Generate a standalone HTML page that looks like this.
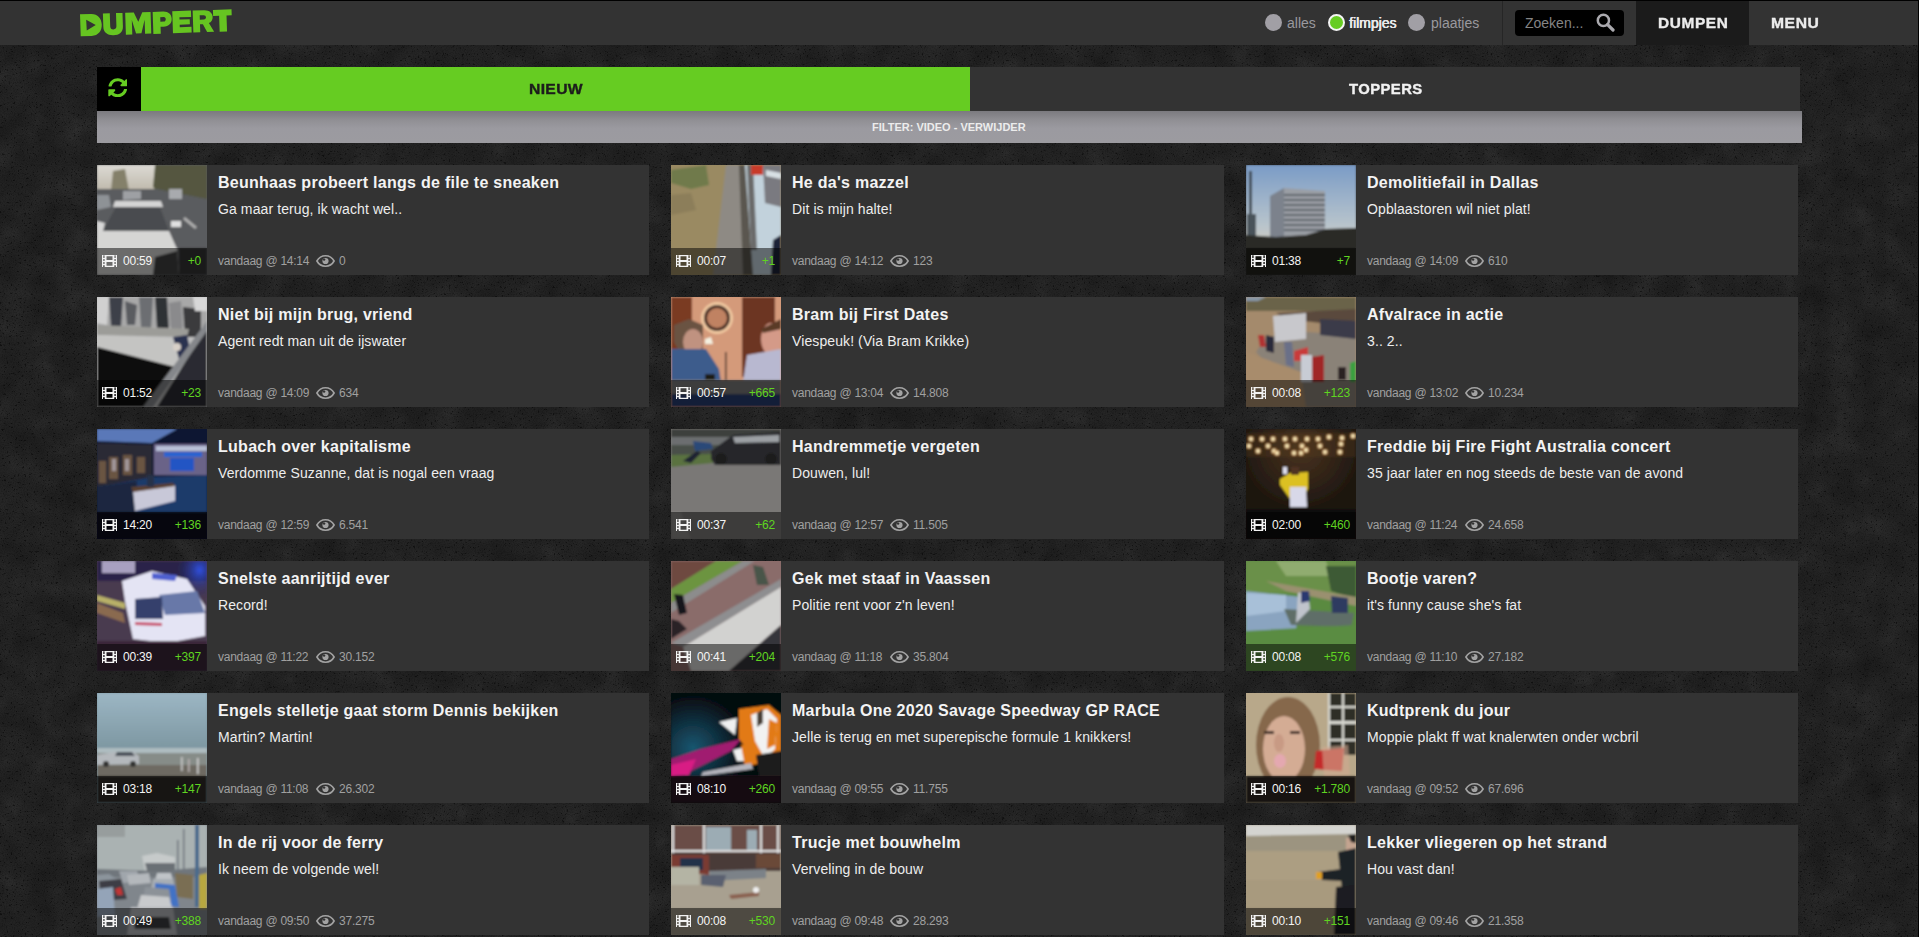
<!DOCTYPE html>
<html><head><meta charset="utf-8"><style>
*{box-sizing:border-box}
html,body{margin:0;padding:0}
body{width:1919px;height:937px;overflow:hidden;position:relative;background:#1f1f1f;font-family:"Liberation Sans",sans-serif}
.bd{position:absolute;background:#000}
#hdr{position:absolute;left:0;top:1px;width:1918px;height:44px;background:#333}
.rad{position:absolute;top:12.8px;width:17px;height:17px;border-radius:50%;background:#a19fa5}
.rad.on{background:#66cc22;border:2px solid #f4f4f4}
.rl{position:absolute;top:13px;font-size:14px;line-height:18px;color:#9a999e;white-space:nowrap}
.rl.on{color:#e6e6e6;text-shadow:0 0 0.6px #fff,0.4px 0 0 #e6e6e6}
.mont{font-weight:bold;white-space:nowrap;position:absolute}
.card{position:absolute;width:552.67px;height:110px;background:#333;overflow:hidden}
.th{position:absolute;left:0;top:0;width:110px;height:110px;overflow:hidden}
.th svg.img{position:absolute;left:0;top:0}
.ov{position:absolute;left:0;top:83px;width:110px;height:27px;background:rgba(0,0,0,0.5)}
.film{position:absolute;left:5px;top:90px}
.tm{position:absolute;left:26px;top:88px;font-size:12px;line-height:16px;color:#f4f4f4;letter-spacing:-0.2px;white-space:nowrap}
.kd{position:absolute;right:6px;top:88px;font-size:12px;line-height:16px;color:#5fd421;letter-spacing:-0.2px;white-space:nowrap}
.ti{position:absolute;left:121px;top:8px;font-size:16px;line-height:20px;font-weight:bold;color:#f3f3f3;letter-spacing:0.27px;white-space:nowrap}
.sb{position:absolute;left:121px;top:33.5px;font-size:14px;line-height:20px;color:#ededed;letter-spacing:0.1px;white-space:nowrap}
.mt{position:absolute;left:121px;top:88px;font-size:12px;line-height:16px;color:#a0a0a0;letter-spacing:-0.25px;white-space:nowrap}
.eye{position:absolute;top:90px}
.vw{position:absolute;top:88px;font-size:12px;line-height:16px;color:#a0a0a0;letter-spacing:-0.2px;white-space:nowrap}
</style></head><body>

<svg width="0" height="0" style="position:absolute"><defs><filter id="tb" x="-5%" y="-5%" width="110%" height="110%"><feGaussianBlur stdDeviation="0.9"/></filter></defs></svg>
<svg style="position:absolute;left:0;top:0" width="1919" height="937"><defs><filter id="nzA" x="0" y="0" width="100%" height="100%"><feTurbulence type="fractalNoise" baseFrequency="0.035" numOctaves="4" seed="11"/><feColorMatrix type="matrix" values="0 0 0 0 0  0 0 0 0 0  0 0 0 0 0  2.2 0 0 0 -1.05"/></filter><filter id="nzB" x="0" y="0" width="100%" height="100%"><feTurbulence type="fractalNoise" baseFrequency="0.035" numOctaves="4" seed="11"/><feColorMatrix type="matrix" values="0 0 0 0 1  0 0 0 0 1  0 0 0 0 1  -2.2 0 0 0 1.0"/></filter><filter id="nzC" x="0" y="0" width="100%" height="100%"><feTurbulence type="fractalNoise" baseFrequency="0.45" numOctaves="2" seed="5"/><feColorMatrix type="matrix" values="0 0 0 0 0  0 0 0 0 0  0 0 0 0 0  10 0 0 0 -6.6"/></filter><filter id="nzD" x="0" y="0" width="100%" height="100%"><feTurbulence type="fractalNoise" baseFrequency="0.9" numOctaves="1" seed="3"/><feColorMatrix type="matrix" values="0 0 0 0 0  0 0 0 0 0  0 0 0 0 0  0 0 0 -2.2 1.25"/></filter></defs><rect width="1919" height="937" fill="#242424"/><rect width="1919" height="937" filter="url(#nzA)" opacity="0.22"/><rect width="1919" height="937" filter="url(#nzB)" opacity="0.05"/><rect width="1919" height="937" filter="url(#nzC)" opacity="0.45"/><rect width="1919" height="937" filter="url(#nzD)" opacity="0.25"/></svg>
<div class="bd" style="left:0;top:0;width:1919px;height:1px"></div>
<div class="bd" style="left:1918px;top:0;width:1px;height:937px"></div>
<div id="hdr">
<svg style="position:absolute;left:0;top:-1px" width="260" height="45" viewBox="0 0 260 45"><g transform="translate(80,14.3) rotate(-1.9)" fill="#66c421" fill-rule="evenodd">
<path d="M0 0H11C17.5 0 21.4 4.5 21.4 11S17.5 22 11 22H0Z M6 5.6L15.4 11.2L6.2 16.5Z"/>
<path d="M22.9 0H29.8V13C29.8 15.5 31 16.2 32.9 16.2S36 15.5 36 13V0H42.5V13.5C42.5 19 38.5 22 32.7 22S22.9 19 22.9 13.5Z"/>
<path d="M45.2 0H53.8L58 9.5L62.3 0H70.6V21.6H64.4V7.5L60.8 21H55.4L51.6 7.5V22H45.2Z"/>
<path d="M72.7 0H83C88.5 0 91.5 3 91.5 7.6S88.5 15.2 83 15.2H80.1V22H72.7Z M80.1 5.5H83.5C85 5.5 85.5 6.5 85.5 7.7S85 10 83.5 10H80.1Z"/>
<path d="M92.3 0H111V6.3H99.3V8.5H109.5V13.7H99.3V16.2H111V22H92.3Z"/>
<path d="M112.7 0H124C129.5 0 132.5 3 132.5 7C132.5 10 131 12 128.5 13L133.5 22H126.5L122.5 14H119.6V22H112.7Z M119.6 5H123.5C125 5 125.8 6 125.8 7.2S125 9.3 123.5 9.3H119.6Z"/>
<path d="M133 0H151.6V6H146.4V22H139V6H133Z"/>
</g></svg>
<div class="rad" style="left:1264.5px"></div><div class="rl" style="left:1287px">alles</div>
<div class="rad on" style="left:1327.5px"></div><div class="rl on" style="left:1349px">filmpjes</div>
<div class="rad" style="left:1408px"></div><div class="rl" style="left:1431px">plaatjes</div>
<div style="position:absolute;left:1502px;top:0;width:1px;height:44px;background:#262626"></div>
<div style="position:absolute;left:1515px;top:9px;width:109px;height:26px;border-radius:4px;background:#000"></div>
<div style="position:absolute;left:1525px;top:13px;font-size:14px;line-height:18px;color:#858585;white-space:nowrap">Zoeken...</div>
<svg style="position:absolute;left:1595.5px;top:11.5px" width="19" height="19" viewBox="0 0 19 19"><circle cx="7.4" cy="7.4" r="5.6" fill="none" stroke="#aaa9ae" stroke-width="2.5"/><path d="M11.6 11.6L17 17" stroke="#aaa9ae" stroke-width="3.2" stroke-linecap="round"/></svg>
<div style="position:absolute;left:1635.5px;top:0;width:113.5px;height:44px;background:#1b1b1b"></div>
<div class="mont" style="left:1658px;top:13px;font-size:14px;line-height:18px;color:#ececec;letter-spacing:0.55px;transform:scaleX(1.1);transform-origin:0 0;-webkit-text-stroke:0.35px #ececec">DUMPEN</div>
<div class="mont" style="left:1771px;top:13px;font-size:14px;line-height:18px;color:#ececec;letter-spacing:0.5px;transform:scaleX(1.12);transform-origin:0 0;-webkit-text-stroke:0.35px #ececec">MENU</div>
</div>
<div style="position:absolute;left:97px;top:67px;width:44px;height:44px;background:#000"></div>
<svg style="position:absolute;left:107.7px;top:77.7px" width="19.6" height="19.6" viewBox="0 0 512 512"><path fill="#66cc22" d="M370.72 133.28C339.458 104.008 298.888 87.962 255.848 88c-77.458.068-144.328 53.178-162.791 126.85-1.344 5.363-6.122 9.15-11.651 9.15H24.103c-7.498 0-13.194-6.807-11.807-14.176C33.933 94.924 134.813 8 256 8c66.448 0 126.791 26.136 171.315 68.685L463.03 40.97C478.149 25.851 504 36.559 504 57.941V192c0 13.255-10.745 24-24 24H345.941c-21.382 0-32.09-25.851-16.971-40.971l41.75-41.749zM32 296h134.059c21.382 0 32.09 25.851 16.971 40.971l-41.75 41.75c31.262 29.273 71.835 45.319 114.876 45.28 77.418-.07 144.315-53.144 162.787-126.849 1.344-5.363 6.122-9.15 11.651-9.15h57.304c7.498 0 13.194 6.807 11.807 14.176C478.067 417.076 377.187 504 256 504c-66.448 0-126.791-26.136-171.315-68.685L48.97 471.03C33.851 486.149 8 475.441 8 454.059V320c0-13.255 10.745-24 24-24z"/></svg>
<div style="position:absolute;left:141px;top:67px;width:829px;height:44px;background:#66cc22"></div>
<div class="mont" style="left:529px;top:80px;font-size:14px;line-height:18px;color:#1c1c1c;letter-spacing:0.3px;transform:scaleX(1.12);transform-origin:0 0;-webkit-text-stroke:0.35px #1c1c1c">NIEUW</div>
<div style="position:absolute;left:970px;top:67px;width:830px;height:44px;background:#333"></div>
<div class="mont" style="left:1349px;top:80px;font-size:14px;line-height:18px;color:#f2f2f2;letter-spacing:0.4px;transform:scaleX(1.06);transform-origin:0 0;-webkit-text-stroke:0.35px #f2f2f2">TOPPERS</div>
<div style="position:absolute;left:97px;top:111px;width:1705px;height:32px;background:linear-gradient(#7b7a7f,#919095 30%,#9b9aa0 55%,#9c9ba0)"></div>
<div class="mont" style="left:872px;top:120px;font-size:11px;line-height:14px;color:#ececec">FILTER: VIDEO - VERWIJDER</div>
<div class="card" style="left:97px;top:165px;width:552px">
<div class="th"><svg class="img" width="110" height="110" viewBox="0 0 110 110"><g filter="url(#tb)"><rect x="-10" y="-10" width="130" height="130" fill="#5a5c5e"/>
<defs><linearGradient id="g1s" x1="0" y1="0" x2="0" y2="1"><stop offset="0" stop-color="#dcdad4"/><stop offset="1" stop-color="#bcb6a8"/></linearGradient></defs>
<rect width="70" height="28" fill="url(#g1s)"/>
<polygon points="58,0 110,0 110,36 62,28 56,22" fill="#55573f"/>
<polygon points="16,6 28,4 32,26 14,26" fill="#84806a"/>
<polygon points="0,24 60,24 110,34 110,83 0,83" fill="#5a5c5e"/>
<polygon points="0,30 12,30 14,42 0,45" fill="#8e9296"/>
<polygon points="26,26 44,26 44,34 26,35" fill="#9ea0a4"/>
<polygon points="72,24 85,24 85,34 72,34" fill="#a8aaae"/>
<polygon points="88,52 100,62 98,64 86,54" fill="#b0b0b0"/>
<polygon points="20,40 62,40 72,66 6,66" fill="#4a4c50"/>
<polygon points="18,36 64,36 66,42 16,42" fill="#d4d4d4"/>
<polygon points="0,56 8,58 6,66 0,66" fill="#d8d8d8"/>
<polygon points="74,56 84,56 84,62 74,62" fill="#e0e0e0"/>
<polygon points="0,64 6,66 72,66 80,84 82,110 0,110" fill="#d6d6d4"/>
<polygon points="58,92 80,86 82,110 56,110" fill="#404040"/>
<polygon points="82,83 110,83 110,110 82,110" fill="#343434"/>
</g></svg></div>
<div class="ov"></div><svg class="film" width="15" height="12" viewBox="0 0 15 12"><path fill="#f2f2f2" fill-rule="evenodd" d="M0 0H15V12H0Z M1 1.2H2.8V2.8H1Z M1 4.2H2.8V5.8H1Z M1 7.2H2.8V8.8H1Z M1 10.2H2.8V12H1Z M1 0H2.8V0.6H1Z M12.2 0H14V0.6H12.2Z M12.2 1.2H14V2.8H12.2Z M12.2 4.2H14V5.8H12.2Z M12.2 7.2H14V8.8H12.2Z M12.2 10.2H14V12H12.2Z M4.3 1.3H10.7V5H4.3Z M4.3 7H10.7V10.7H4.3Z"/><path fill="#f2f2f2" d="M3.6 0H4.3V12H3.6Z M10.7 0H11.4V12H10.7Z"/></svg>
<div class="tm">00:59</div><div class="kd" style="left:0;width:104px;text-align:right">+0</div>
<div class="ti">Beunhaas probeert langs de file te sneaken</div><div class="sb">Ga maar terug, ik wacht wel..</div>
<div class="mt">vandaag @ 14:14</div>
<svg class="eye" style="left:219px" width="19" height="12" viewBox="0 0 19 12"><path fill="none" stroke="#a3a3a3" stroke-width="1.6" d="M0.9 6C3 2.2 6.2 0.8 9.5 0.8S16 2.2 18.1 6C16 9.8 12.8 11.2 9.5 11.2S3 9.8 0.9 6Z"/><circle cx="9.5" cy="6" r="3.1" fill="#a3a3a3"/><circle cx="8.1" cy="4.6" r="1.2" fill="#333"/></svg><div class="vw" style="left:242px">0</div>
</div>
<div class="card" style="left:671px;top:165px;width:553px">
<div class="th"><svg class="img" width="110" height="110" viewBox="0 0 110 110"><g filter="url(#tb)"><rect x="-10" y="-10" width="130" height="130" fill="#9a8a62"/>
<polygon points="0,0 62,0 48,83 40,110 0,110" fill="#9a8a62"/>
<polygon points="0,5 35,0 38,20 20,24 0,18" fill="#6f7a4c"/>
<polygon points="0,30 20,28 25,45 0,50" fill="#8c7e5a"/>
<polygon points="55,0 75,0 80,110 42,110" fill="#8e8a84"/>
<polygon points="68,0 76,0 82,110 72,110" fill="#5a5650"/>
<polygon points="74,0 110,0 110,110 82,110" fill="#c2d2dc"/>
<polygon points="76,0 82,0 86,85 80,85" fill="#6a6a6a"/>
<polygon points="80,0 92,0 92,10 80,10" fill="#c83a2c"/>
<polygon points="92,0 110,0 110,42 94,38" fill="#7a7a80"/>
<polygon points="95,5 110,8 110,14 95,11" fill="#d8e0e4"/>
<polygon points="102,75 110,70 110,110 100,110" fill="#1c2238"/>
</g></svg></div>
<div class="ov"></div><svg class="film" width="15" height="12" viewBox="0 0 15 12"><path fill="#f2f2f2" fill-rule="evenodd" d="M0 0H15V12H0Z M1 1.2H2.8V2.8H1Z M1 4.2H2.8V5.8H1Z M1 7.2H2.8V8.8H1Z M1 10.2H2.8V12H1Z M1 0H2.8V0.6H1Z M12.2 0H14V0.6H12.2Z M12.2 1.2H14V2.8H12.2Z M12.2 4.2H14V5.8H12.2Z M12.2 7.2H14V8.8H12.2Z M12.2 10.2H14V12H12.2Z M4.3 1.3H10.7V5H4.3Z M4.3 7H10.7V10.7H4.3Z"/><path fill="#f2f2f2" d="M3.6 0H4.3V12H3.6Z M10.7 0H11.4V12H10.7Z"/></svg>
<div class="tm">00:07</div><div class="kd" style="left:0;width:104px;text-align:right">+1</div>
<div class="ti">He da's mazzel</div><div class="sb">Dit is mijn halte!</div>
<div class="mt">vandaag @ 14:12</div>
<svg class="eye" style="left:219px" width="19" height="12" viewBox="0 0 19 12"><path fill="none" stroke="#a3a3a3" stroke-width="1.6" d="M0.9 6C3 2.2 6.2 0.8 9.5 0.8S16 2.2 18.1 6C16 9.8 12.8 11.2 9.5 11.2S3 9.8 0.9 6Z"/><circle cx="9.5" cy="6" r="3.1" fill="#a3a3a3"/><circle cx="8.1" cy="4.6" r="1.2" fill="#333"/></svg><div class="vw" style="left:242px">123</div>
</div>
<div class="card" style="left:1246px;top:165px;width:552px">
<div class="th"><svg class="img" width="110" height="110" viewBox="0 0 110 110"><g filter="url(#tb)"><rect x="-10" y="-10" width="130" height="130" fill="#2c2c26"/>
<defs><linearGradient id="g3s" x1="0" y1="0" x2="0" y2="1"><stop offset="0" stop-color="#7b9cc6"/><stop offset="0.75" stop-color="#b8c4cc"/><stop offset="1" stop-color="#d0ccc0"/></linearGradient></defs>
<rect width="110" height="80" fill="url(#g3s)"/>
<polygon points="24,31 38,23 38,75 24,77" fill="#7c828c"/>
<polygon points="38,23 79,26 79,72 38,75" fill="#9a9ea4"/>
<g fill="#5c6068"><rect x="38" y="29" width="41" height="2"/><rect x="38" y="34" width="41" height="2"/><rect x="38" y="39" width="41" height="2"/><rect x="38" y="44" width="41" height="2"/><rect x="38" y="49" width="41" height="2"/><rect x="38" y="54" width="41" height="2"/><rect x="38" y="59" width="41" height="2"/><rect x="38" y="64" width="41" height="2"/></g>
<rect x="3" y="6" width="3" height="80" fill="#3e4650"/>
<rect x="1" y="49" width="9" height="25" fill="#4a525a"/>
<polygon points="0,70 30,72 60,70 80,64 110,63 110,86 0,86" fill="#2c2c26"/>
<rect x="0" y="83" width="110" height="27" fill="#24221e"/>
</g></svg></div>
<div class="ov"></div><svg class="film" width="15" height="12" viewBox="0 0 15 12"><path fill="#f2f2f2" fill-rule="evenodd" d="M0 0H15V12H0Z M1 1.2H2.8V2.8H1Z M1 4.2H2.8V5.8H1Z M1 7.2H2.8V8.8H1Z M1 10.2H2.8V12H1Z M1 0H2.8V0.6H1Z M12.2 0H14V0.6H12.2Z M12.2 1.2H14V2.8H12.2Z M12.2 4.2H14V5.8H12.2Z M12.2 7.2H14V8.8H12.2Z M12.2 10.2H14V12H12.2Z M4.3 1.3H10.7V5H4.3Z M4.3 7H10.7V10.7H4.3Z"/><path fill="#f2f2f2" d="M3.6 0H4.3V12H3.6Z M10.7 0H11.4V12H10.7Z"/></svg>
<div class="tm">01:38</div><div class="kd" style="left:0;width:104px;text-align:right">+7</div>
<div class="ti">Demolitiefail in Dallas</div><div class="sb">Opblaastoren wil niet plat!</div>
<div class="mt">vandaag @ 14:09</div>
<svg class="eye" style="left:219px" width="19" height="12" viewBox="0 0 19 12"><path fill="none" stroke="#a3a3a3" stroke-width="1.6" d="M0.9 6C3 2.2 6.2 0.8 9.5 0.8S16 2.2 18.1 6C16 9.8 12.8 11.2 9.5 11.2S3 9.8 0.9 6Z"/><circle cx="9.5" cy="6" r="3.1" fill="#a3a3a3"/><circle cx="8.1" cy="4.6" r="1.2" fill="#333"/></svg><div class="vw" style="left:242px">610</div>
</div>
<div class="card" style="left:97px;top:297px;width:552px">
<div class="th"><svg class="img" width="110" height="110" viewBox="0 0 110 110"><g filter="url(#tb)"><rect x="-10" y="-10" width="130" height="130" fill="#c0c0c0"/>
<rect width="110" height="30" fill="#a8a8a8"/>
<polygon points="0,0 12,0 10,28 0,26" fill="#d0d0d0"/>
<polygon points="12,0 26,0 24,30 14,30" fill="#3e4048"/>
<polygon points="28,4 40,8 38,28 30,28" fill="#5a5c60"/>
<polygon points="42,0 56,0 54,32 44,30" fill="#6c6e72"/>
<polygon points="58,0 70,0 72,34 60,32" fill="#2e3036"/>
<polygon points="72,6 84,4 86,36 74,34" fill="#8a8a8c"/>
<polygon points="86,10 104,12 104,40 88,40" fill="#3a3a3c"/>
<polygon points="96,0 110,0 110,14 98,14" fill="#d8d8d8"/>
<polygon points="0,28 92,32 90,40 0,38" fill="#9c9c98"/>
<polygon points="0,38 90,42 78,70 0,50" fill="#c4c4c2"/>
<polygon points="0,50 78,70 54,110 0,110" fill="#0c0c0c"/>
<polygon points="76,40 90,38 94,56 82,62" fill="#2a3050"/>
<circle cx="80" cy="50" r="4" fill="#d8d0c8"/>
<polygon points="60,110 110,30 110,110" fill="#2a2c30"/>
<polygon points="46,110 110,24 110,34 56,110" fill="#85878b"/>
</g></svg></div>
<div class="ov"></div><svg class="film" width="15" height="12" viewBox="0 0 15 12"><path fill="#f2f2f2" fill-rule="evenodd" d="M0 0H15V12H0Z M1 1.2H2.8V2.8H1Z M1 4.2H2.8V5.8H1Z M1 7.2H2.8V8.8H1Z M1 10.2H2.8V12H1Z M1 0H2.8V0.6H1Z M12.2 0H14V0.6H12.2Z M12.2 1.2H14V2.8H12.2Z M12.2 4.2H14V5.8H12.2Z M12.2 7.2H14V8.8H12.2Z M12.2 10.2H14V12H12.2Z M4.3 1.3H10.7V5H4.3Z M4.3 7H10.7V10.7H4.3Z"/><path fill="#f2f2f2" d="M3.6 0H4.3V12H3.6Z M10.7 0H11.4V12H10.7Z"/></svg>
<div class="tm">01:52</div><div class="kd" style="left:0;width:104px;text-align:right">+23</div>
<div class="ti">Niet bij mijn brug, vriend</div><div class="sb">Agent redt man uit de ijswater</div>
<div class="mt">vandaag @ 14:09</div>
<svg class="eye" style="left:219px" width="19" height="12" viewBox="0 0 19 12"><path fill="none" stroke="#a3a3a3" stroke-width="1.6" d="M0.9 6C3 2.2 6.2 0.8 9.5 0.8S16 2.2 18.1 6C16 9.8 12.8 11.2 9.5 11.2S3 9.8 0.9 6Z"/><circle cx="9.5" cy="6" r="3.1" fill="#a3a3a3"/><circle cx="8.1" cy="4.6" r="1.2" fill="#333"/></svg><div class="vw" style="left:242px">634</div>
</div>
<div class="card" style="left:671px;top:297px;width:553px">
<div class="th"><svg class="img" width="110" height="110" viewBox="0 0 110 110"><g filter="url(#tb)"><rect x="-10" y="-10" width="130" height="130" fill="#d49a7a"/>
<rect width="110" height="110" fill="#d49a7a"/>
<rect x="0" y="0" width="21" height="52" fill="#7a3a22"/>
<rect x="71" y="0" width="33" height="80" fill="#6c3420"/>
<circle cx="46" cy="21" r="16" fill="#f0c8a0"/>
<circle cx="46" cy="21" r="13" fill="#4a3028"/>
<circle cx="46" cy="21" r="10" fill="#c08262"/>
<polygon points="3,28 18,22 32,28 32,55 10,58 3,45" fill="#6a5242"/>
<ellipse cx="22" cy="45" rx="10" ry="13" fill="#c09280"/>
<polygon points="0,52 35,52 48,72 50,85 0,85" fill="#3c5c8c"/>
<rect x="54" y="55" width="1.5" height="28" fill="#3a2a20"/>
<polygon points="34,42 40,40 42,47 34,47" fill="#f4f0e0"/>
<ellipse cx="100" cy="42" rx="10" ry="16" fill="#d49a88"/>
<polygon points="90,32 110,22 110,32 92,36" fill="#5a3a28"/>
<polygon points="76,58 110,52 110,85 72,85" fill="#b8b8d0"/>
<rect x="34" y="77" width="10" height="12" fill="#1e1a18"/>
<rect x="0" y="83" width="110" height="15" fill="#7a7a7a"/>
<rect x="0" y="97" width="110" height="13" fill="#283c70"/>
</g></svg></div>
<div class="ov"></div><svg class="film" width="15" height="12" viewBox="0 0 15 12"><path fill="#f2f2f2" fill-rule="evenodd" d="M0 0H15V12H0Z M1 1.2H2.8V2.8H1Z M1 4.2H2.8V5.8H1Z M1 7.2H2.8V8.8H1Z M1 10.2H2.8V12H1Z M1 0H2.8V0.6H1Z M12.2 0H14V0.6H12.2Z M12.2 1.2H14V2.8H12.2Z M12.2 4.2H14V5.8H12.2Z M12.2 7.2H14V8.8H12.2Z M12.2 10.2H14V12H12.2Z M4.3 1.3H10.7V5H4.3Z M4.3 7H10.7V10.7H4.3Z"/><path fill="#f2f2f2" d="M3.6 0H4.3V12H3.6Z M10.7 0H11.4V12H10.7Z"/></svg>
<div class="tm">00:57</div><div class="kd" style="left:0;width:104px;text-align:right">+665</div>
<div class="ti">Bram bij First Dates</div><div class="sb">Viespeuk! (Via Bram Krikke)</div>
<div class="mt">vandaag @ 13:04</div>
<svg class="eye" style="left:219px" width="19" height="12" viewBox="0 0 19 12"><path fill="none" stroke="#a3a3a3" stroke-width="1.6" d="M0.9 6C3 2.2 6.2 0.8 9.5 0.8S16 2.2 18.1 6C16 9.8 12.8 11.2 9.5 11.2S3 9.8 0.9 6Z"/><circle cx="9.5" cy="6" r="3.1" fill="#a3a3a3"/><circle cx="8.1" cy="4.6" r="1.2" fill="#333"/></svg><div class="vw" style="left:242px">14.808</div>
</div>
<div class="card" style="left:1246px;top:297px;width:552px">
<div class="th"><svg class="img" width="110" height="110" viewBox="0 0 110 110"><g filter="url(#tb)"><rect x="-10" y="-10" width="130" height="130" fill="#a48a6c"/>
<rect width="110" height="110" fill="#a48a6c"/>
<polygon points="0,0 110,0 110,14 0,14" fill="#6a6448"/>
<polygon points="0,0 20,0 12,4 0,4" fill="#8898a8"/>
<polygon points="30,16 110,12 110,30 40,22" fill="#5a4a3c"/>
<polygon points="20,40 60,35 110,38 110,110 60,110 10,55" fill="#8a8278"/>
<polygon points="0,55 55,75 60,110 0,110" fill="#a88c6c"/>
<polygon points="27,19 60,16 60,42 29,45" fill="#c8c8cc"/>
<polygon points="74,22 110,24 110,42 74,38" fill="#3a3a48"/>
<polygon points="12,38 18,38 20,50 14,50" fill="#b03030"/>
<polygon points="20,38 28,40 28,56 20,54" fill="#2a2a3a"/>
<polygon points="38,45 46,45 48,70 40,68" fill="#6a7088"/>
<polygon points="48,54 62,50 62,64 48,64" fill="#c83a3a"/>
<polygon points="55,58 66,58 66,85 55,85" fill="#c8ccd4"/>
<polygon points="66,60 78,58 78,85 66,85" fill="#a02828"/>
<polygon points="92,70 100,70 100,83 92,83" fill="#2a2020"/>
<polygon points="104,66 110,64 110,85 104,85" fill="#3aa040"/>
</g></svg></div>
<div class="ov"></div><svg class="film" width="15" height="12" viewBox="0 0 15 12"><path fill="#f2f2f2" fill-rule="evenodd" d="M0 0H15V12H0Z M1 1.2H2.8V2.8H1Z M1 4.2H2.8V5.8H1Z M1 7.2H2.8V8.8H1Z M1 10.2H2.8V12H1Z M1 0H2.8V0.6H1Z M12.2 0H14V0.6H12.2Z M12.2 1.2H14V2.8H12.2Z M12.2 4.2H14V5.8H12.2Z M12.2 7.2H14V8.8H12.2Z M12.2 10.2H14V12H12.2Z M4.3 1.3H10.7V5H4.3Z M4.3 7H10.7V10.7H4.3Z"/><path fill="#f2f2f2" d="M3.6 0H4.3V12H3.6Z M10.7 0H11.4V12H10.7Z"/></svg>
<div class="tm">00:08</div><div class="kd" style="left:0;width:104px;text-align:right">+123</div>
<div class="ti">Afvalrace in actie</div><div class="sb">3.. 2..</div>
<div class="mt">vandaag @ 13:02</div>
<svg class="eye" style="left:219px" width="19" height="12" viewBox="0 0 19 12"><path fill="none" stroke="#a3a3a3" stroke-width="1.6" d="M0.9 6C3 2.2 6.2 0.8 9.5 0.8S16 2.2 18.1 6C16 9.8 12.8 11.2 9.5 11.2S3 9.8 0.9 6Z"/><circle cx="9.5" cy="6" r="3.1" fill="#a3a3a3"/><circle cx="8.1" cy="4.6" r="1.2" fill="#333"/></svg><div class="vw" style="left:242px">10.234</div>
</div>
<div class="card" style="left:97px;top:429px;width:552px">
<div class="th"><svg class="img" width="110" height="110" viewBox="0 0 110 110"><g filter="url(#tb)"><rect x="-10" y="-10" width="130" height="130" fill="#101830"/>
<rect width="110" height="110" fill="#101830"/>
<polygon points="0,0 80,0 55,14 0,12" fill="#5a78b8"/>
<polygon points="0,14 55,16 55,48 0,58" fill="#2c2a34"/>
<g fill="#a07850" opacity="0.55"><rect x="2" y="32" width="7" height="22"/><rect x="12" y="28" width="9" height="22"/><rect x="26" y="26" width="9" height="20"/><rect x="40" y="28" width="8" height="16"/></g><g fill="#d8d8f0" opacity="0.5"><rect x="15" y="30" width="4" height="12"/><rect x="28" y="30" width="4" height="12"/></g>
<polygon points="57,15 110,15 110,46 57,46" fill="#6a6488"/>
<rect x="59" y="17" width="51" height="5" fill="#b8c0d8"/>
<rect x="67" y="23" width="38" height="5" fill="#2a64d0"/>
<rect x="73" y="29" width="24" height="13" fill="#2454c4"/>
<polygon points="0,58 55,48 110,46 110,83 0,83" fill="#1e3a6a"/>
<polygon points="0,58 40,52 38,83 0,83" fill="#1a2840"/>
<polygon points="36,62 78,56 78,72 38,82" fill="#c8c8d8"/>
<polygon points="34,58 76,54 78,57 36,63" fill="#5a4030"/>
<rect x="50" y="46" width="7" height="12" fill="#283048"/>
<rect x="0" y="83" width="110" height="27" fill="#0a0e1a"/>
</g></svg></div>
<div class="ov"></div><svg class="film" width="15" height="12" viewBox="0 0 15 12"><path fill="#f2f2f2" fill-rule="evenodd" d="M0 0H15V12H0Z M1 1.2H2.8V2.8H1Z M1 4.2H2.8V5.8H1Z M1 7.2H2.8V8.8H1Z M1 10.2H2.8V12H1Z M1 0H2.8V0.6H1Z M12.2 0H14V0.6H12.2Z M12.2 1.2H14V2.8H12.2Z M12.2 4.2H14V5.8H12.2Z M12.2 7.2H14V8.8H12.2Z M12.2 10.2H14V12H12.2Z M4.3 1.3H10.7V5H4.3Z M4.3 7H10.7V10.7H4.3Z"/><path fill="#f2f2f2" d="M3.6 0H4.3V12H3.6Z M10.7 0H11.4V12H10.7Z"/></svg>
<div class="tm">14:20</div><div class="kd" style="left:0;width:104px;text-align:right">+136</div>
<div class="ti">Lubach over kapitalisme</div><div class="sb">Verdomme Suzanne, dat is nogal een vraag</div>
<div class="mt">vandaag @ 12:59</div>
<svg class="eye" style="left:219px" width="19" height="12" viewBox="0 0 19 12"><path fill="none" stroke="#a3a3a3" stroke-width="1.6" d="M0.9 6C3 2.2 6.2 0.8 9.5 0.8S16 2.2 18.1 6C16 9.8 12.8 11.2 9.5 11.2S3 9.8 0.9 6Z"/><circle cx="9.5" cy="6" r="3.1" fill="#a3a3a3"/><circle cx="8.1" cy="4.6" r="1.2" fill="#333"/></svg><div class="vw" style="left:242px">6.541</div>
</div>
<div class="card" style="left:671px;top:429px;width:553px">
<div class="th"><svg class="img" width="110" height="110" viewBox="0 0 110 110"><g filter="url(#tb)"><rect x="-10" y="-10" width="130" height="130" fill="#7a7876"/>
<rect width="110" height="110" fill="#7a7876"/>
<rect width="110" height="12" fill="#3c403c"/>
<rect y="8" width="110" height="8" fill="#6c6e70"/>
<rect y="16" width="110" height="12" fill="#4a5048"/>
<polygon points="0,26 42,25 42,34 0,38" fill="#5a7240"/>
<polygon points="40,22 62,6 110,3 110,36 44,36 40,30" fill="#26282c"/>
<polygon points="62,8 108,6 108,13 64,14" fill="#9ca0a4"/>
<circle cx="50" cy="30" r="6" fill="#1a1a1c"/><circle cx="100" cy="30" r="6" fill="#1a1a1c"/>
<polygon points="22,12 40,14 42,20 24,22" fill="#2c4878"/>
<polygon points="12,32 26,22 30,24 20,34" fill="#1e2230"/>
<polygon points="0,83 10,83 20,110 0,110" fill="#8a8886"/>
</g></svg></div>
<div class="ov"></div><svg class="film" width="15" height="12" viewBox="0 0 15 12"><path fill="#f2f2f2" fill-rule="evenodd" d="M0 0H15V12H0Z M1 1.2H2.8V2.8H1Z M1 4.2H2.8V5.8H1Z M1 7.2H2.8V8.8H1Z M1 10.2H2.8V12H1Z M1 0H2.8V0.6H1Z M12.2 0H14V0.6H12.2Z M12.2 1.2H14V2.8H12.2Z M12.2 4.2H14V5.8H12.2Z M12.2 7.2H14V8.8H12.2Z M12.2 10.2H14V12H12.2Z M4.3 1.3H10.7V5H4.3Z M4.3 7H10.7V10.7H4.3Z"/><path fill="#f2f2f2" d="M3.6 0H4.3V12H3.6Z M10.7 0H11.4V12H10.7Z"/></svg>
<div class="tm">00:37</div><div class="kd" style="left:0;width:104px;text-align:right">+62</div>
<div class="ti">Handremmetje vergeten</div><div class="sb">Douwen, lul!</div>
<div class="mt">vandaag @ 12:57</div>
<svg class="eye" style="left:219px" width="19" height="12" viewBox="0 0 19 12"><path fill="none" stroke="#a3a3a3" stroke-width="1.6" d="M0.9 6C3 2.2 6.2 0.8 9.5 0.8S16 2.2 18.1 6C16 9.8 12.8 11.2 9.5 11.2S3 9.8 0.9 6Z"/><circle cx="9.5" cy="6" r="3.1" fill="#a3a3a3"/><circle cx="8.1" cy="4.6" r="1.2" fill="#333"/></svg><div class="vw" style="left:242px">11.505</div>
</div>
<div class="card" style="left:1246px;top:429px;width:552px">
<div class="th"><svg class="img" width="110" height="110" viewBox="0 0 110 110"><g filter="url(#tb)"><rect x="-10" y="-10" width="130" height="130" fill="#1a140e"/>
<defs><radialGradient id="g9" cx="0.5" cy="0.18" r="0.6"><stop offset="0" stop-color="#4a3420"/><stop offset="1" stop-color="#1a140e"/></radialGradient></defs>
<rect width="110" height="110" fill="url(#g9)"/>
<rect y="4" width="110" height="24" fill="#5a3e22" opacity="0.3"/>
<circle cx="5" cy="10" r="3.2" fill="#c08040" opacity="0.6"/><circle cx="5" cy="10" r="1.9" fill="#fff0c0"/><circle cx="16" cy="10" r="3.2" fill="#c08040" opacity="0.6"/><circle cx="16" cy="10" r="1.9" fill="#fff0c0"/><circle cx="27" cy="10" r="3.2" fill="#c08040" opacity="0.6"/><circle cx="27" cy="10" r="1.9" fill="#fff0c0"/><circle cx="39" cy="10" r="3.2" fill="#c08040" opacity="0.6"/><circle cx="39" cy="10" r="1.9" fill="#fff0c0"/><circle cx="49" cy="10" r="3.2" fill="#c08040" opacity="0.6"/><circle cx="49" cy="10" r="1.9" fill="#fff0c0"/><circle cx="61" cy="10" r="3.2" fill="#c08040" opacity="0.6"/><circle cx="61" cy="10" r="1.9" fill="#fff0c0"/><circle cx="72" cy="10" r="3.2" fill="#c08040" opacity="0.6"/><circle cx="72" cy="10" r="1.9" fill="#fff0c0"/><circle cx="83" cy="8" r="3.2" fill="#c08040" opacity="0.6"/><circle cx="83" cy="8" r="1.9" fill="#fff0c0"/><circle cx="96" cy="9" r="3.2" fill="#c08040" opacity="0.6"/><circle cx="96" cy="9" r="1.9" fill="#fff0c0"/><circle cx="107" cy="7" r="3.2" fill="#c08040" opacity="0.6"/><circle cx="107" cy="7" r="1.9" fill="#fff0c0"/><circle cx="3" cy="17" r="3.2" fill="#c08040" opacity="0.6"/><circle cx="3" cy="17" r="1.9" fill="#fff0c0"/><circle cx="22" cy="17" r="3.2" fill="#c08040" opacity="0.6"/><circle cx="22" cy="17" r="1.9" fill="#fff0c0"/><circle cx="41" cy="17" r="3.2" fill="#c08040" opacity="0.6"/><circle cx="41" cy="17" r="1.9" fill="#fff0c0"/><circle cx="56" cy="17" r="3.2" fill="#c08040" opacity="0.6"/><circle cx="56" cy="17" r="1.9" fill="#fff0c0"/><circle cx="74" cy="17" r="3.2" fill="#c08040" opacity="0.6"/><circle cx="74" cy="17" r="1.9" fill="#fff0c0"/><circle cx="95" cy="15" r="3.2" fill="#c08040" opacity="0.6"/><circle cx="95" cy="15" r="1.9" fill="#fff0c0"/><circle cx="12" cy="22" r="3.2" fill="#c08040" opacity="0.6"/><circle cx="12" cy="22" r="1.9" fill="#fff0c0"/><circle cx="28" cy="22" r="3.2" fill="#c08040" opacity="0.6"/><circle cx="28" cy="22" r="1.9" fill="#fff0c0"/><circle cx="48" cy="24" r="3.2" fill="#c08040" opacity="0.6"/><circle cx="48" cy="24" r="1.9" fill="#fff0c0"/><circle cx="60" cy="21" r="3.2" fill="#c08040" opacity="0.6"/><circle cx="60" cy="21" r="1.9" fill="#fff0c0"/><circle cx="79" cy="23" r="3.2" fill="#c08040" opacity="0.6"/><circle cx="79" cy="23" r="1.9" fill="#fff0c0"/><circle cx="94" cy="23" r="3.2" fill="#c08040" opacity="0.6"/><circle cx="94" cy="23" r="1.9" fill="#fff0c0"/><circle cx="31" cy="24" r="3.2" fill="#c08040" opacity="0.6"/><circle cx="31" cy="24" r="1.9" fill="#fff0c0"/><circle cx="55" cy="24" r="3.2" fill="#c08040" opacity="0.6"/><circle cx="55" cy="24" r="1.9" fill="#fff0c0"/>
<polygon points="34,50 44,44 62,43 62,60 56,70 44,70 34,56" fill="#dcc024"/>
<polygon points="44,58 60,58 61,78 44,78" fill="#d8d8e8"/>
<rect x="45" y="38" width="8" height="8" fill="#503020"/>
<rect x="37" y="38" width="4" height="7" fill="#e0e0f0"/>
<rect y="80" width="110" height="30" fill="#0e0a08"/>
</g></svg></div>
<div class="ov"></div><svg class="film" width="15" height="12" viewBox="0 0 15 12"><path fill="#f2f2f2" fill-rule="evenodd" d="M0 0H15V12H0Z M1 1.2H2.8V2.8H1Z M1 4.2H2.8V5.8H1Z M1 7.2H2.8V8.8H1Z M1 10.2H2.8V12H1Z M1 0H2.8V0.6H1Z M12.2 0H14V0.6H12.2Z M12.2 1.2H14V2.8H12.2Z M12.2 4.2H14V5.8H12.2Z M12.2 7.2H14V8.8H12.2Z M12.2 10.2H14V12H12.2Z M4.3 1.3H10.7V5H4.3Z M4.3 7H10.7V10.7H4.3Z"/><path fill="#f2f2f2" d="M3.6 0H4.3V12H3.6Z M10.7 0H11.4V12H10.7Z"/></svg>
<div class="tm">02:00</div><div class="kd" style="left:0;width:104px;text-align:right">+460</div>
<div class="ti">Freddie bij Fire Fight Australia concert</div><div class="sb">35 jaar later en nog steeds de beste van de avond</div>
<div class="mt">vandaag @ 11:24</div>
<svg class="eye" style="left:219px" width="19" height="12" viewBox="0 0 19 12"><path fill="none" stroke="#a3a3a3" stroke-width="1.6" d="M0.9 6C3 2.2 6.2 0.8 9.5 0.8S16 2.2 18.1 6C16 9.8 12.8 11.2 9.5 11.2S3 9.8 0.9 6Z"/><circle cx="9.5" cy="6" r="3.1" fill="#a3a3a3"/><circle cx="8.1" cy="4.6" r="1.2" fill="#333"/></svg><div class="vw" style="left:242px">24.658</div>
</div>
<div class="card" style="left:97px;top:561px;width:552px">
<div class="th"><svg class="img" width="110" height="110" viewBox="0 0 110 110"><g filter="url(#tb)"><rect x="-10" y="-10" width="130" height="130" fill="#4a3a50"/>
<defs><radialGradient id="g10" cx="0.85" cy="0.15" r="0.5"><stop offset="0" stop-color="#3050e0"/><stop offset="1" stop-color="#202050" stop-opacity="0"/></radialGradient></defs>
<rect width="110" height="110" fill="#4a3a50"/>
<rect width="110" height="20" fill="#2a2448"/>
<rect x="60" y="0" width="50" height="60" fill="url(#g10)"/>
<rect x="5" y="0" width="33" height="12" fill="#a8a0c0"/>
<polygon points="0,34 28,42 28,48 0,40" fill="#b8b068"/>
<polygon points="0,42 26,52 28,62 0,52" fill="#8a6a50"/>
<polygon points="25,20 55,10 90,18 108,45 108,75 70,82 36,78 28,40" fill="#e4e4f4"/>
<polygon points="62,34 100,30 108,52 68,54" fill="#6878a8"/>
<polygon points="38,38 65,36 66,58 38,58" fill="#34406c"/>
<polygon points="38,61 65,62 65,65 38,64" fill="#c84a68"/>
<polygon points="55,12 80,14 78,20 55,18" fill="#5060d0"/>
<rect x="0" y="80" width="110" height="30" fill="#3a2838"/>
</g></svg></div>
<div class="ov"></div><svg class="film" width="15" height="12" viewBox="0 0 15 12"><path fill="#f2f2f2" fill-rule="evenodd" d="M0 0H15V12H0Z M1 1.2H2.8V2.8H1Z M1 4.2H2.8V5.8H1Z M1 7.2H2.8V8.8H1Z M1 10.2H2.8V12H1Z M1 0H2.8V0.6H1Z M12.2 0H14V0.6H12.2Z M12.2 1.2H14V2.8H12.2Z M12.2 4.2H14V5.8H12.2Z M12.2 7.2H14V8.8H12.2Z M12.2 10.2H14V12H12.2Z M4.3 1.3H10.7V5H4.3Z M4.3 7H10.7V10.7H4.3Z"/><path fill="#f2f2f2" d="M3.6 0H4.3V12H3.6Z M10.7 0H11.4V12H10.7Z"/></svg>
<div class="tm">00:39</div><div class="kd" style="left:0;width:104px;text-align:right">+397</div>
<div class="ti">Snelste aanrijtijd ever</div><div class="sb">Record!</div>
<div class="mt">vandaag @ 11:22</div>
<svg class="eye" style="left:219px" width="19" height="12" viewBox="0 0 19 12"><path fill="none" stroke="#a3a3a3" stroke-width="1.6" d="M0.9 6C3 2.2 6.2 0.8 9.5 0.8S16 2.2 18.1 6C16 9.8 12.8 11.2 9.5 11.2S3 9.8 0.9 6Z"/><circle cx="9.5" cy="6" r="3.1" fill="#a3a3a3"/><circle cx="8.1" cy="4.6" r="1.2" fill="#333"/></svg><div class="vw" style="left:242px">30.152</div>
</div>
<div class="card" style="left:671px;top:561px;width:553px">
<div class="th"><svg class="img" width="110" height="110" viewBox="0 0 110 110"><g filter="url(#tb)"><rect x="-10" y="-10" width="130" height="130" fill="#8c6c6a"/>
<rect width="110" height="110" fill="#8c6c6a"/>
<polygon points="0,0 45,0 0,28" fill="#6e4840"/>
<polygon points="0,28 45,0 72,0 0,42" fill="#6c9440"/>
<polygon points="0,42 72,0 84,0 0,52" fill="#8c8c8c"/>
<polygon points="0,52 84,0 110,0 110,18 0,82" fill="#8a6c6a"/>
<polygon points="0,82 110,18 110,26 12,86" fill="#8e8e90"/>
<polygon points="12,86 110,26 110,64 58,110 20,110" fill="#d2d2d0"/>
<polygon points="58,110 110,64 110,110" fill="#34343a"/>
<polygon points="3,33 12,34 16,52 8,54" fill="#18181e"/>
<polygon points="0,58 8,60 16,68 0,78" fill="#2a2426"/>
<polygon points="82,4 92,6 98,24 86,24" fill="#4a5448"/>
</g></svg></div>
<div class="ov"></div><svg class="film" width="15" height="12" viewBox="0 0 15 12"><path fill="#f2f2f2" fill-rule="evenodd" d="M0 0H15V12H0Z M1 1.2H2.8V2.8H1Z M1 4.2H2.8V5.8H1Z M1 7.2H2.8V8.8H1Z M1 10.2H2.8V12H1Z M1 0H2.8V0.6H1Z M12.2 0H14V0.6H12.2Z M12.2 1.2H14V2.8H12.2Z M12.2 4.2H14V5.8H12.2Z M12.2 7.2H14V8.8H12.2Z M12.2 10.2H14V12H12.2Z M4.3 1.3H10.7V5H4.3Z M4.3 7H10.7V10.7H4.3Z"/><path fill="#f2f2f2" d="M3.6 0H4.3V12H3.6Z M10.7 0H11.4V12H10.7Z"/></svg>
<div class="tm">00:41</div><div class="kd" style="left:0;width:104px;text-align:right">+204</div>
<div class="ti">Gek met staaf in Vaassen</div><div class="sb">Politie rent voor z'n leven!</div>
<div class="mt">vandaag @ 11:18</div>
<svg class="eye" style="left:219px" width="19" height="12" viewBox="0 0 19 12"><path fill="none" stroke="#a3a3a3" stroke-width="1.6" d="M0.9 6C3 2.2 6.2 0.8 9.5 0.8S16 2.2 18.1 6C16 9.8 12.8 11.2 9.5 11.2S3 9.8 0.9 6Z"/><circle cx="9.5" cy="6" r="3.1" fill="#a3a3a3"/><circle cx="8.1" cy="4.6" r="1.2" fill="#333"/></svg><div class="vw" style="left:242px">35.804</div>
</div>
<div class="card" style="left:1246px;top:561px;width:552px">
<div class="th"><svg class="img" width="110" height="110" viewBox="0 0 110 110"><g filter="url(#tb)"><rect x="-10" y="-10" width="130" height="130" fill="#5a8a40"/>
<rect width="110" height="110" fill="#5a8a40"/>
<rect width="110" height="32" fill="#6a9048"/>
<polygon points="30,0 80,0 85,15 40,15" fill="#90ac70"/>
<polygon points="80,5 110,5 110,38 85,30" fill="#3e5a34"/>
<polygon points="20,20 110,36 110,45 40,30" fill="#9a9070"/>
<polygon points="0,30 55,36 50,68 0,75" fill="#8aa4c0"/>
<polygon points="0,32 40,34 40,50 0,55" fill="#a8c0d8"/>
<polygon points="38,48 108,52 105,66 45,64" fill="#5e6e68"/>
<polygon points="52,32 62,30 64,48 50,62" fill="#c0c4cc"/>
<polygon points="55,30 63,30 64,40 55,42" fill="#2a3870"/>
<polygon points="85,35 102,37 102,52 86,52" fill="#2e3a60"/>
<polygon points="0,70 110,64 110,110 0,110" fill="#5a8c42"/>
</g></svg></div>
<div class="ov"></div><svg class="film" width="15" height="12" viewBox="0 0 15 12"><path fill="#f2f2f2" fill-rule="evenodd" d="M0 0H15V12H0Z M1 1.2H2.8V2.8H1Z M1 4.2H2.8V5.8H1Z M1 7.2H2.8V8.8H1Z M1 10.2H2.8V12H1Z M1 0H2.8V0.6H1Z M12.2 0H14V0.6H12.2Z M12.2 1.2H14V2.8H12.2Z M12.2 4.2H14V5.8H12.2Z M12.2 7.2H14V8.8H12.2Z M12.2 10.2H14V12H12.2Z M4.3 1.3H10.7V5H4.3Z M4.3 7H10.7V10.7H4.3Z"/><path fill="#f2f2f2" d="M3.6 0H4.3V12H3.6Z M10.7 0H11.4V12H10.7Z"/></svg>
<div class="tm">00:08</div><div class="kd" style="left:0;width:104px;text-align:right">+576</div>
<div class="ti">Bootje varen?</div><div class="sb">it's funny cause she's fat</div>
<div class="mt">vandaag @ 11:10</div>
<svg class="eye" style="left:219px" width="19" height="12" viewBox="0 0 19 12"><path fill="none" stroke="#a3a3a3" stroke-width="1.6" d="M0.9 6C3 2.2 6.2 0.8 9.5 0.8S16 2.2 18.1 6C16 9.8 12.8 11.2 9.5 11.2S3 9.8 0.9 6Z"/><circle cx="9.5" cy="6" r="3.1" fill="#a3a3a3"/><circle cx="8.1" cy="4.6" r="1.2" fill="#333"/></svg><div class="vw" style="left:242px">27.182</div>
</div>
<div class="card" style="left:97px;top:693px;width:552px">
<div class="th"><svg class="img" width="110" height="110" viewBox="0 0 110 110"><g filter="url(#tb)"><rect x="-10" y="-10" width="130" height="130" fill="#7c96a0"/>
<defs><linearGradient id="g13" x1="0" y1="0" x2="0" y2="1"><stop offset="0" stop-color="#9cb6c4"/><stop offset="1" stop-color="#7c96a0"/></linearGradient></defs>
<rect width="110" height="58" fill="url(#g13)"/>
<rect y="55" width="110" height="5" fill="#aebcc0"/>
<rect y="60" width="110" height="12" fill="#868c88"/>
<rect y="72" width="110" height="11" fill="#6e6a62"/>
<polygon points="0,62 18,59 36,59 42,63 42,71 0,72" fill="#b4b8bc"/>
<rect x="84" y="64" width="1.6" height="14" fill="#c8c8c8"/>
<rect x="91" y="66" width="1.6" height="13" fill="#b8b0b0"/>
<rect x="100" y="65" width="1.6" height="16" fill="#d0d0d0"/>
<polygon points="20,59 35,59 38,63 18,63" fill="#4a5058"/><circle cx="9" cy="71" r="3" fill="#303030"/><circle cx="36" cy="71" r="3" fill="#303030"/>
<rect y="83" width="110" height="27" fill="#2e2c28"/>
</g></svg></div>
<div class="ov"></div><svg class="film" width="15" height="12" viewBox="0 0 15 12"><path fill="#f2f2f2" fill-rule="evenodd" d="M0 0H15V12H0Z M1 1.2H2.8V2.8H1Z M1 4.2H2.8V5.8H1Z M1 7.2H2.8V8.8H1Z M1 10.2H2.8V12H1Z M1 0H2.8V0.6H1Z M12.2 0H14V0.6H12.2Z M12.2 1.2H14V2.8H12.2Z M12.2 4.2H14V5.8H12.2Z M12.2 7.2H14V8.8H12.2Z M12.2 10.2H14V12H12.2Z M4.3 1.3H10.7V5H4.3Z M4.3 7H10.7V10.7H4.3Z"/><path fill="#f2f2f2" d="M3.6 0H4.3V12H3.6Z M10.7 0H11.4V12H10.7Z"/></svg>
<div class="tm">03:18</div><div class="kd" style="left:0;width:104px;text-align:right">+147</div>
<div class="ti">Engels stelletje gaat storm Dennis bekijken</div><div class="sb">Martin? Martin!</div>
<div class="mt">vandaag @ 11:08</div>
<svg class="eye" style="left:219px" width="19" height="12" viewBox="0 0 19 12"><path fill="none" stroke="#a3a3a3" stroke-width="1.6" d="M0.9 6C3 2.2 6.2 0.8 9.5 0.8S16 2.2 18.1 6C16 9.8 12.8 11.2 9.5 11.2S3 9.8 0.9 6Z"/><circle cx="9.5" cy="6" r="3.1" fill="#a3a3a3"/><circle cx="8.1" cy="4.6" r="1.2" fill="#333"/></svg><div class="vw" style="left:242px">26.302</div>
</div>
<div class="card" style="left:671px;top:693px;width:553px">
<div class="th"><svg class="img" width="110" height="110" viewBox="0 0 110 110"><g filter="url(#tb)"><rect x="-10" y="-10" width="130" height="130" fill="#05080c"/>
<defs><radialGradient id="g14" cx="0.2" cy="0.5" r="0.5"><stop offset="0" stop-color="#1a5670"/><stop offset="1" stop-color="#05080c"/></radialGradient></defs>
<rect width="110" height="110" fill="url(#g14)"/>
<polygon points="0,66 30,56 70,46 60,58 20,78 0,80" fill="#a01a70"/>
<polygon points="0,72 25,66 18,82 0,83" fill="#d81c84"/>
<polygon points="48,29 66,25 64,42" fill="#f0f0f0"/>
<polygon points="68,16 98,12 110,22 110,60 92,76 68,46" fill="#e27a14"/>
<polygon points="80,22 96,16 106,26 104,56 94,66 84,48" fill="#f2f2f2"/>
<polygon points="98,26 106,30 104,52 96,56" fill="#e27a14"/>
<polygon points="86,20 92,16 92,30 86,34" fill="#4a4038"/>
<polygon points="62,57 74,54 78,68 66,68" fill="#f0f0f0"/>
<polygon points="70,52 84,50 90,70 74,74" fill="#e27a14"/>
<polygon points="32,79 80,70 82,76 30,83" fill="#b4b4bc"/>
<polygon points="85,62 110,58 110,83 88,83" fill="#1a1a1e"/>
<rect y="83" width="110" height="27" fill="#2a1424"/>
</g></svg></div>
<div class="ov"></div><svg class="film" width="15" height="12" viewBox="0 0 15 12"><path fill="#f2f2f2" fill-rule="evenodd" d="M0 0H15V12H0Z M1 1.2H2.8V2.8H1Z M1 4.2H2.8V5.8H1Z M1 7.2H2.8V8.8H1Z M1 10.2H2.8V12H1Z M1 0H2.8V0.6H1Z M12.2 0H14V0.6H12.2Z M12.2 1.2H14V2.8H12.2Z M12.2 4.2H14V5.8H12.2Z M12.2 7.2H14V8.8H12.2Z M12.2 10.2H14V12H12.2Z M4.3 1.3H10.7V5H4.3Z M4.3 7H10.7V10.7H4.3Z"/><path fill="#f2f2f2" d="M3.6 0H4.3V12H3.6Z M10.7 0H11.4V12H10.7Z"/></svg>
<div class="tm">08:10</div><div class="kd" style="left:0;width:104px;text-align:right">+260</div>
<div class="ti">Marbula One 2020 Savage Speedway GP RACE</div><div class="sb">Jelle is terug en met superepische formule 1 knikkers!</div>
<div class="mt">vandaag @ 09:55</div>
<svg class="eye" style="left:219px" width="19" height="12" viewBox="0 0 19 12"><path fill="none" stroke="#a3a3a3" stroke-width="1.6" d="M0.9 6C3 2.2 6.2 0.8 9.5 0.8S16 2.2 18.1 6C16 9.8 12.8 11.2 9.5 11.2S3 9.8 0.9 6Z"/><circle cx="9.5" cy="6" r="3.1" fill="#a3a3a3"/><circle cx="8.1" cy="4.6" r="1.2" fill="#333"/></svg><div class="vw" style="left:242px">11.755</div>
</div>
<div class="card" style="left:1246px;top:693px;width:552px">
<div class="th"><svg class="img" width="110" height="110" viewBox="0 0 110 110"><g filter="url(#tb)"><rect x="-10" y="-10" width="130" height="130" fill="#b8a88a"/>
<rect width="110" height="110" fill="#b8a88a"/>
<rect x="82" y="0" width="28" height="62" fill="#2e2e28"/>
<g fill="#d8d8d0"><rect x="82" y="0" width="2" height="62"/><rect x="96" y="0" width="2" height="62"/><rect x="82" y="13" width="28" height="2"/><rect x="82" y="28" width="28" height="3"/><rect x="82" y="46" width="28" height="2"/></g>
<ellipse cx="42" cy="52" rx="32" ry="48" fill="#86684c"/>
<ellipse cx="38" cy="56" rx="21" ry="33" fill="#d4ac94"/><ellipse cx="33" cy="50" rx="5" ry="9" fill="#c89a84"/>
<rect x="18" y="38" width="10" height="3" fill="#3a2a20"/><rect x="44" y="38" width="10" height="3" fill="#3a2a20"/>
<ellipse cx="34" cy="68" rx="6" ry="7" fill="#e4a8b0"/>
<polygon points="70,58 98,55 96,78 68,76" fill="#c42a2a"/>
<polygon points="76,54 102,52 104,82 78,84" fill="#d0a890" opacity="0.6"/>
<rect y="83" width="110" height="27" fill="#2e2824"/>
</g></svg></div>
<div class="ov"></div><svg class="film" width="15" height="12" viewBox="0 0 15 12"><path fill="#f2f2f2" fill-rule="evenodd" d="M0 0H15V12H0Z M1 1.2H2.8V2.8H1Z M1 4.2H2.8V5.8H1Z M1 7.2H2.8V8.8H1Z M1 10.2H2.8V12H1Z M1 0H2.8V0.6H1Z M12.2 0H14V0.6H12.2Z M12.2 1.2H14V2.8H12.2Z M12.2 4.2H14V5.8H12.2Z M12.2 7.2H14V8.8H12.2Z M12.2 10.2H14V12H12.2Z M4.3 1.3H10.7V5H4.3Z M4.3 7H10.7V10.7H4.3Z"/><path fill="#f2f2f2" d="M3.6 0H4.3V12H3.6Z M10.7 0H11.4V12H10.7Z"/></svg>
<div class="tm">00:16</div><div class="kd" style="left:0;width:104px;text-align:right">+1.780</div>
<div class="ti">Kudtprenk du jour</div><div class="sb">Moppie plakt ff wat knalerwten onder wcbril</div>
<div class="mt">vandaag @ 09:52</div>
<svg class="eye" style="left:219px" width="19" height="12" viewBox="0 0 19 12"><path fill="none" stroke="#a3a3a3" stroke-width="1.6" d="M0.9 6C3 2.2 6.2 0.8 9.5 0.8S16 2.2 18.1 6C16 9.8 12.8 11.2 9.5 11.2S3 9.8 0.9 6Z"/><circle cx="9.5" cy="6" r="3.1" fill="#a3a3a3"/><circle cx="8.1" cy="4.6" r="1.2" fill="#333"/></svg><div class="vw" style="left:242px">67.696</div>
</div>
<div class="card" style="left:97px;top:825px;width:552px">
<div class="th"><svg class="img" width="110" height="110" viewBox="0 0 110 110"><g filter="url(#tb)"><rect x="-10" y="-10" width="130" height="130" fill="#80868c"/>
<rect width="110" height="110" fill="#80868c"/>
<rect width="110" height="46" fill="#aab2b2"/>
<rect x="0" y="0" width="28" height="12" fill="#8a9090" opacity="0.6"/>
<polygon points="45,31 60,28 78,32 78,46 48,46" fill="#c6caca"/>
<polygon points="48,38 78,38 78,46 50,46" fill="#6a7074"/>
<rect x="86" y="4" width="1.5" height="50" fill="#6a7078"/>
<rect x="80" y="15" width="1.5" height="40" fill="#6a7078"/>
<polygon points="0,44 60,46 110,42 110,52 0,52" fill="#70767c"/>
<polygon points="0,50 12,49 20,54 18,62 0,64" fill="#8c949c"/>
<polygon points="22,46 40,46 44,56 26,58" fill="#a0a6ac"/>
<polygon points="30,50 52,48 54,58 32,60" fill="#b4b8bc"/>
<polygon points="2,56 24,54 30,74 4,76" fill="#3c3e44"/>
<polygon points="18,64 24,62 26,70 20,70" fill="#c03434"/>
<polygon points="0,64 16,62 18,90 0,92" fill="#94a4b8"/>
<polygon points="60,48 74,48 76,56 58,56" fill="#c0c4c8"/>
<polygon points="56,54 76,54 78,64 54,64" fill="#a8aeb4"/>
<polygon points="58,58 78,60 82,82 58,80" fill="#4272c4"/>
<polygon points="48,62 72,64 74,76 46,74" fill="#8c9298"/>
<polygon points="44,70 72,72 76,86 40,84" fill="#c8cacc"/>
<polygon points="78,48 96,50 96,74 80,72" fill="#7a6e52"/>
<rect x="98" y="0" width="4" height="82" fill="#4a6a8c"/>
<polygon points="102,50 110,48 110,84 102,84" fill="#b8a840"/>
<polygon points="34,82 76,82 80,110 30,110" fill="#b4b6ba"/>
<polygon points="36,92 72,92 74,104 38,104" fill="#3a3c40"/>
</g></svg></div>
<div class="ov"></div><svg class="film" width="15" height="12" viewBox="0 0 15 12"><path fill="#f2f2f2" fill-rule="evenodd" d="M0 0H15V12H0Z M1 1.2H2.8V2.8H1Z M1 4.2H2.8V5.8H1Z M1 7.2H2.8V8.8H1Z M1 10.2H2.8V12H1Z M1 0H2.8V0.6H1Z M12.2 0H14V0.6H12.2Z M12.2 1.2H14V2.8H12.2Z M12.2 4.2H14V5.8H12.2Z M12.2 7.2H14V8.8H12.2Z M12.2 10.2H14V12H12.2Z M4.3 1.3H10.7V5H4.3Z M4.3 7H10.7V10.7H4.3Z"/><path fill="#f2f2f2" d="M3.6 0H4.3V12H3.6Z M10.7 0H11.4V12H10.7Z"/></svg>
<div class="tm">00:49</div><div class="kd" style="left:0;width:104px;text-align:right">+388</div>
<div class="ti">In de rij voor de ferry</div><div class="sb">Ik neem de volgende wel!</div>
<div class="mt">vandaag @ 09:50</div>
<svg class="eye" style="left:219px" width="19" height="12" viewBox="0 0 19 12"><path fill="none" stroke="#a3a3a3" stroke-width="1.6" d="M0.9 6C3 2.2 6.2 0.8 9.5 0.8S16 2.2 18.1 6C16 9.8 12.8 11.2 9.5 11.2S3 9.8 0.9 6Z"/><circle cx="9.5" cy="6" r="3.1" fill="#a3a3a3"/><circle cx="8.1" cy="4.6" r="1.2" fill="#333"/></svg><div class="vw" style="left:242px">37.275</div>
</div>
<div class="card" style="left:671px;top:825px;width:553px">
<div class="th"><svg class="img" width="110" height="110" viewBox="0 0 110 110"><g filter="url(#tb)"><rect x="-10" y="-10" width="130" height="130" fill="#a8a090"/>
<rect width="110" height="110" fill="#a8a090"/>
<rect width="110" height="28" fill="#6a4e46"/>
<rect x="35" y="2" width="25" height="23" fill="#9cacb4"/>
<rect x="76" y="5" width="10" height="20" fill="#9cacb4"/>
<g fill="#e0e0e0"><rect x="1" y="0" width="2" height="28"/><rect x="32" y="0" width="2" height="28"/><rect x="89" y="0" width="2" height="28"/><rect x="106" y="0" width="2" height="28"/><rect x="0" y="25" width="110" height="2"/></g>
<rect x="0" y="28" width="110" height="18" fill="#4a3a38"/>
<polygon points="0,30 38,30 38,50 0,46" fill="#7a3a30"/>
<rect x="9" y="33" width="23" height="12" fill="#203048"/>
<rect x="85" y="29" width="25" height="14" fill="#6a4a38"/>
<polygon points="0,42 28,42 28,60 0,60" fill="#b4b4a4"/>
<polygon points="38,46 95,44 95,53 40,56" fill="#7c8288"/>
<polygon points="30,50 55,50 52,62 30,60" fill="#5a6070"/>
<polygon points="58,70 88,67 88,71 60,74" fill="#8a6050"/>
<circle cx="85" cy="65" r="3" fill="#f0f0f0"/>
<rect y="83" width="110" height="27" fill="#9c9484"/>
</g></svg></div>
<div class="ov"></div><svg class="film" width="15" height="12" viewBox="0 0 15 12"><path fill="#f2f2f2" fill-rule="evenodd" d="M0 0H15V12H0Z M1 1.2H2.8V2.8H1Z M1 4.2H2.8V5.8H1Z M1 7.2H2.8V8.8H1Z M1 10.2H2.8V12H1Z M1 0H2.8V0.6H1Z M12.2 0H14V0.6H12.2Z M12.2 1.2H14V2.8H12.2Z M12.2 4.2H14V5.8H12.2Z M12.2 7.2H14V8.8H12.2Z M12.2 10.2H14V12H12.2Z M4.3 1.3H10.7V5H4.3Z M4.3 7H10.7V10.7H4.3Z"/><path fill="#f2f2f2" d="M3.6 0H4.3V12H3.6Z M10.7 0H11.4V12H10.7Z"/></svg>
<div class="tm">00:08</div><div class="kd" style="left:0;width:104px;text-align:right">+530</div>
<div class="ti">Trucje met bouwhelm</div><div class="sb">Verveling in de bouw</div>
<div class="mt">vandaag @ 09:48</div>
<svg class="eye" style="left:219px" width="19" height="12" viewBox="0 0 19 12"><path fill="none" stroke="#a3a3a3" stroke-width="1.6" d="M0.9 6C3 2.2 6.2 0.8 9.5 0.8S16 2.2 18.1 6C16 9.8 12.8 11.2 9.5 11.2S3 9.8 0.9 6Z"/><circle cx="9.5" cy="6" r="3.1" fill="#a3a3a3"/><circle cx="8.1" cy="4.6" r="1.2" fill="#333"/></svg><div class="vw" style="left:242px">28.293</div>
</div>
<div class="card" style="left:1246px;top:825px;width:552px">
<div class="th"><svg class="img" width="110" height="110" viewBox="0 0 110 110"><g filter="url(#tb)"><rect x="-10" y="-10" width="130" height="130" fill="#a69a80"/>
<rect width="110" height="110" fill="#a69a80"/>
<rect width="110" height="11" fill="#d4d4d0"/>
<polygon points="0,11 110,9 110,26 0,26" fill="#9c9480"/>
<rect y="26" width="110" height="57" fill="#ac9e82"/>
<rect y="55" width="110" height="28" fill="#a89a7e"/>
<rect y="83" width="110" height="27" fill="#9a8c72"/>
<polygon points="100,13 106,12 110,14 110,27 100,27" fill="#c4a490"/>
<polygon points="102,10 110,9 110,18 105,17" fill="#1e1e1e"/>
<polygon points="92,27 110,23 110,65 96,64" fill="#1e2226"/>
<polygon points="72,47 95,44 96,56 76,55" fill="#1e2226"/>
<polygon points="70,47 76,47 76,54 70,54" fill="#e0a020"/>
<polygon points="90,62 110,60 110,110 88,110" fill="#1a1c20"/>
</g></svg></div>
<div class="ov"></div><svg class="film" width="15" height="12" viewBox="0 0 15 12"><path fill="#f2f2f2" fill-rule="evenodd" d="M0 0H15V12H0Z M1 1.2H2.8V2.8H1Z M1 4.2H2.8V5.8H1Z M1 7.2H2.8V8.8H1Z M1 10.2H2.8V12H1Z M1 0H2.8V0.6H1Z M12.2 0H14V0.6H12.2Z M12.2 1.2H14V2.8H12.2Z M12.2 4.2H14V5.8H12.2Z M12.2 7.2H14V8.8H12.2Z M12.2 10.2H14V12H12.2Z M4.3 1.3H10.7V5H4.3Z M4.3 7H10.7V10.7H4.3Z"/><path fill="#f2f2f2" d="M3.6 0H4.3V12H3.6Z M10.7 0H11.4V12H10.7Z"/></svg>
<div class="tm">00:10</div><div class="kd" style="left:0;width:104px;text-align:right">+151</div>
<div class="ti">Lekker vliegeren op het strand</div><div class="sb">Hou vast dan!</div>
<div class="mt">vandaag @ 09:46</div>
<svg class="eye" style="left:219px" width="19" height="12" viewBox="0 0 19 12"><path fill="none" stroke="#a3a3a3" stroke-width="1.6" d="M0.9 6C3 2.2 6.2 0.8 9.5 0.8S16 2.2 18.1 6C16 9.8 12.8 11.2 9.5 11.2S3 9.8 0.9 6Z"/><circle cx="9.5" cy="6" r="3.1" fill="#a3a3a3"/><circle cx="8.1" cy="4.6" r="1.2" fill="#333"/></svg><div class="vw" style="left:242px">21.358</div>
</div>
</body></html>
